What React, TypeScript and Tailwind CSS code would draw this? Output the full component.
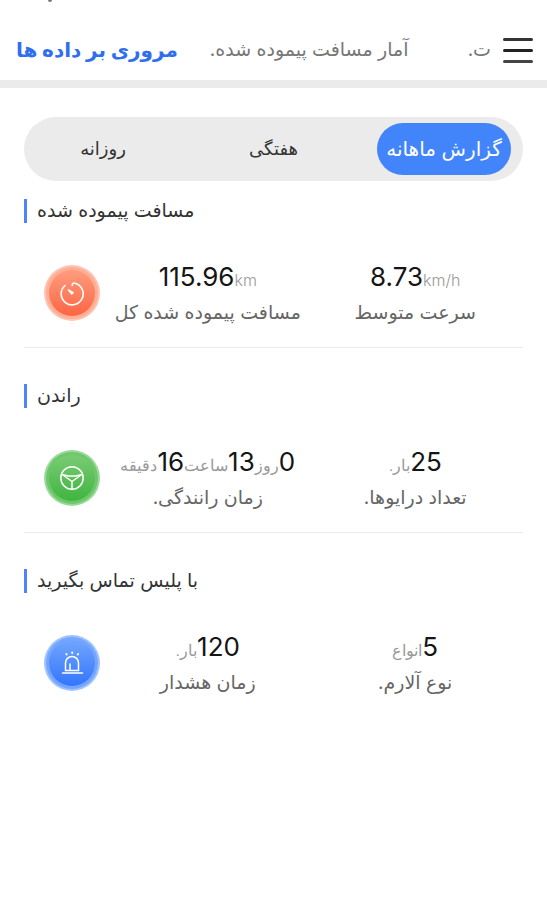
import { useState } from "react";
import type { ReactNode } from "react";

interface Part {
  value: string;
  unit: string;
}

interface Stat {
  parts: Part[];
  label: string;
  dir: "ltr" | "rtl";
}

interface SectionProps {
  title: string;
  icon: ReactNode;
  stats: Stat[];
  last?: boolean;
}

const tabs = ["روزانه", "هفتگی", "گزارش ماهانه"];

function GaugeIcon() {
  return (
    <svg viewBox="0 0 56 56" className="size-14 shrink-0" aria-hidden="true">
      <defs>
        <linearGradient id="gauge" x1="0" y1="0" x2="0" y2="1">
          <stop offset="0" stopColor="#ff9c7e" />
          <stop offset="1" stopColor="#fb6644" />
        </linearGradient>
      </defs>
      <circle cx="28" cy="28" r="28" fill="#fec4b2" />
      <circle cx="28" cy="28" r="26" fill="#feae95" />
      <circle cx="28" cy="28" r="23" fill="url(#gauge)" />
      <g fill="none" stroke="#fff" strokeWidth="1.6" strokeLinecap="round" strokeLinejoin="round">
        <path d="M21 20.5A11 11 0 1 0 31 18.2Q28.4 17.4 28.2 20.5" />
        <path d="M24.5 25L29 27.7L27.8 29Z" fill="#fff" />
      </g>
    </svg>
  );
}

function WheelIcon() {
  return (
    <svg viewBox="0 0 56 56" className="size-14 shrink-0" aria-hidden="true">
      <defs>
        <linearGradient id="wheel" x1="0" y1="0" x2="0" y2="1">
          <stop offset="0" stopColor="#7acb74" />
          <stop offset="1" stopColor="#3fb541" />
        </linearGradient>
      </defs>
      <circle cx="28" cy="28" r="28" fill="#9bd99a" />
      <circle cx="28" cy="28" r="26" fill="#6cc86a" />
      <circle cx="28" cy="28" r="23" fill="url(#wheel)" />
      <g fill="none" stroke="#fff" strokeWidth="1.5" strokeLinejoin="round">
        <circle cx="28" cy="28" r="11.2" />
        <path d="M17.5 24.5L24.5 26H31.5L38.5 24.5" />
        <path d="M19 25L28 31.5L37 25M28 31.5V39" />
      </g>
    </svg>
  );
}

function AlarmIcon() {
  return (
    <svg viewBox="0 0 56 56" className="size-14 shrink-0" aria-hidden="true">
      <defs>
        <linearGradient id="alarm" x1="0" y1="0" x2="0" y2="1">
          <stop offset="0" stopColor="#70a5ff" />
          <stop offset="1" stopColor="#3475fb" />
        </linearGradient>
      </defs>
      <circle cx="28" cy="28" r="28" fill="#a0c3ff" />
      <circle cx="28" cy="28" r="26" fill="#74a6ff" />
      <circle cx="28" cy="28" r="23" fill="url(#alarm)" />
      <g fill="none" stroke="#fff" strokeWidth="1.5" strokeLinecap="round">
        <path d="M21.5 35.5V28a6.5 6.5 0 0 1 13 0V35.5Z" />
        <path d="M18.5 38H38.5" />
        <path d="M26 35V29" />
        <path d="M28.2 17.5V18M22.3 19L22.6 19.4M34.1 19L33.8 19.4" strokeWidth="2" />
      </g>
    </svg>
  );
}

function StatCell({ parts, label, dir }: Stat) {
  return (
    <div className="flex flex-1 flex-col items-center">
      <p dir={dir} className="flex h-8 items-baseline leading-9 whitespace-nowrap">
        {parts.map((part) => (
          <span key={part.unit} className="flex items-baseline">
            <span className="text-[26px] text-[#151515]">{part.value}</span>
            <span className="text-base font-light text-[#999]">{part.unit}</span>
          </span>
        ))}
      </p>
      <p dir="rtl" className="mt-2 text-[19px] leading-7 whitespace-nowrap text-[#666]">
        {label}
      </p>
    </div>
  );
}

function Section({ title, icon, stats, last }: SectionProps) {
  return (
    <section className={last ? "pb-5" : "mb-9 border-b border-[#ececec] pb-5"}>
      <div className="flex items-center gap-2.5">
        <span className="h-6 w-[3px] bg-[#4a86f7]" />
        <h2 dir="rtl" className="text-[19px] leading-6 text-[#333]">
          {title}
        </h2>
      </div>
      <div className="mt-9 flex items-center gap-2 pr-2 pl-5">
        {icon}
        {stats.map((stat) => (
          <StatCell key={stat.label} {...stat} />
        ))}
      </div>
    </section>
  );
}

export default function App() {
  const [active, setActive] = useState(2);

  return (
    <div className="min-h-screen overflow-hidden bg-white font-[Inter,'DejaVu_Sans',sans-serif]">
      <div className="h-5">
        <span className="ml-12 block h-0.5 w-1 rounded-b-full bg-[#777]" />
      </div>
      <header className="flex h-[60px] items-center pr-3.5 pl-4 text-[19px] whitespace-nowrap text-[#777]">
        <a href="#overview" dir="rtl" className="text-xl font-bold text-[#2f6fee]">
          مروری بر داده ها
        </a>
        <a href="#distance" dir="rtl" className="ml-8">
          آمار مسافت پیموده شده.
        </a>
        <a href="#more" dir="rtl" className="mr-3 ml-auto">
          ت.
        </a>
        <button type="button" aria-label="منو" className="flex w-[30px] flex-col gap-2">
          <span className="h-[3px] w-full rounded-full bg-[#333]" />
          <span className="h-[3px] w-full rounded-full bg-[#222]" />
          <span className="h-[3px] w-full rounded-full bg-[#444]" />
        </button>
      </header>
      <div className="h-2 bg-[#ebebeb]" />

      <main className="px-6 pt-[29px]">
        <nav className="flex h-16 items-center justify-between rounded-full bg-[#ebebeb] px-3">
          {tabs.map((tab, i) => (
            <button
              key={tab}
              type="button"
              dir="rtl"
              aria-pressed={active === i}
              onClick={() => setActive(i)}
              className={`h-[52px] w-[134px] cursor-pointer rounded-full whitespace-nowrap ${
                active === i ? "bg-[#4285fa] text-xl text-white" : "text-lg text-[#333]"
              }`}
            >
              {tab}
            </button>
          ))}
        </nav>

        <div className="mt-[18px]">
          <Section
            title="مسافت پیموده شده"
            icon={<GaugeIcon />}
            stats={[
              { parts: [{ value: "115.96", unit: "km" }], label: "مسافت پیموده شده کل", dir: "ltr" },
              { parts: [{ value: "8.73", unit: "km/h" }], label: "سرعت متوسط", dir: "ltr" },
            ]}
          />
          <Section
            title="راندن"
            icon={<WheelIcon />}
            stats={[
              {
                parts: [
                  { value: "0", unit: "روز" },
                  { value: "13", unit: "ساعت" },
                  { value: "16", unit: "دقیقه" },
                ],
                label: "زمان رانندگی.",
                dir: "rtl",
              },
              { parts: [{ value: "25", unit: "بار." }], label: "تعداد درایوها.", dir: "rtl" },
            ]}
          />
          <Section
            title="با پلیس تماس بگیرید"
            icon={<AlarmIcon />}
            last
            stats={[
              { parts: [{ value: "120", unit: "بار." }], label: "زمان هشدار", dir: "rtl" },
              { parts: [{ value: "5", unit: "انواع" }], label: "نوع آلارم.", dir: "rtl" },
            ]}
          />
        </div>
      </main>
    </div>
  );
}
